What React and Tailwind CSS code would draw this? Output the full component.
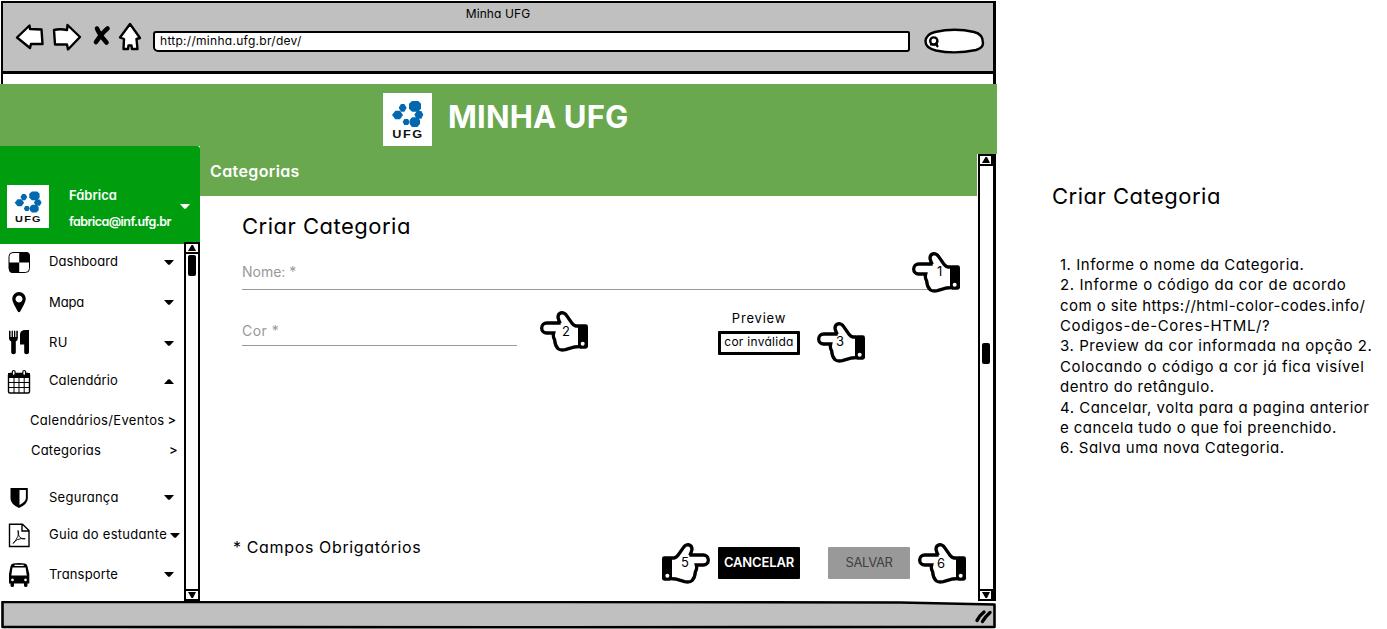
import React from "react";

const outline = { fill: "#fff", stroke: "#000", strokeWidth: 2.4, strokeLinejoin: "round", strokeLinecap: "round" };

function NavIcons() {
  return (
    <svg className="mt-[19px] h-[32px] w-[130px] shrink-0" viewBox="14 22 130 32">
      <path {...outline} d="M17 37.500 L29.500 25.500 L30 29 L41.500 29.500 L42.500 44 L31 44 L30 48 Z" />
      <path {...outline} d="M54 30 Q60 28.500 67 30 L67.500 25 L80 37 L68 49.500 L67 44.500 L55 44.500 Z" />
      <path d="M97 28.500 Q99 34 106.500 42.500 M107.500 28.500 Q102 33 96 42" fill="none" stroke="#000" strokeWidth="4.600" strokeLinecap="round" />
      <path {...outline} d="M130 24 L140 38 L136.500 39 L137.500 49 L132 49 L131.500 45.500 L128.500 45.500 L128 49 L123.500 49 L124 39 L120 37.500 Z" />
    </svg>
  );
}

function SearchPill() {
  return (
    <svg className="mt-[23px] ml-[13px] h-[30px] w-[62px] shrink-0" viewBox="923 26 62 30">
      <path {...outline} d="M935 32 Q955 27.500 974 32 Q983 34 983 43 Q983 48 976 50 Q955 54.500 936 50.500 Q925.500 48 925.500 41.500 Q926 34 935 32 Z" />
      <circle cx="933.800" cy="41" r="3.600" fill="none" stroke="#000" strokeWidth="2.400" />
      <path d="M935 43 L938 47 M930 44.500 H938" fill="none" stroke="#000" strokeWidth="2.200" />
    </svg>
  );
}

function UfgLogo({ className }) {
  return (
    <svg className={className} viewBox="0 0 147 159" preserveAspectRatio="none">
      <rect width="147" height="159" fill="#fff" />
      <g fill="#0368ad">
        <path d="M54 33h10l7 11-7 12H54l-7-12z" />
        <path d="M87 24h19l8 8v15l-8 9H87l-9-9V32z" />
        <path d="M37 53h14l9 13-9 13H37L27 66z" />
        <path d="M101 54h14l6 11-6 12h-14l-7-12z" />
        <path d="M64 78h11l5 9-5 9H64l-5-9z" />
        <path d="M87 73h16l8 8v12l-8 9H87l-7-9V81z" />
      </g>
      <text x="28" y="135" textLength="94" lengthAdjust="spacingAndGlyphs" fontFamily="Liberation Sans, sans-serif" fontWeight="bold" fontSize="34" letterSpacing="4" fill="#111">UFG</text>
    </svg>
  );
}

function Caret({ up, color = "fill-black" }) {
  return (
    <svg className={`h-[5px] w-[10px] shrink-0 ${color}`} viewBox="0 0 10 5">
      <path d={up ? "M0 5 L4 .4 Q5 0 6 .4 L10 5Z" : "M0 0 H10 L6 4.600 Q5 5 4 4.600Z"} />
    </svg>
  );
}

function Hand({ n, flip, digit = "left-[19px]", className = "" }) {
  return (
    <div className={`relative h-[41px] w-[48px] shrink-0 ${className}`}>
      <svg className={flip ? "h-full w-full -scale-x-100" : "h-full w-full"} viewBox="0 0 144 123">
        <path
          d="M60 36 H20 A15 15 0 0 0 20 66 H41 Q38 78 44 87 Q45 104 54 113 Q60 119 76 116 L104 108 Q112 107 118 107 V45 H108 Q102 44 97 38 L80 14 Q74 5 65 5 Q54 7 54 19 Q56 29 61 37 Z"
          fill="#fff"
        />
        <path
          d="M62 36 H20 A15 15 0 0 0 20 66 H41 Q38 78 44 87 Q45 104 54 113 Q60 119 76 116 L104 108 Q112 107 118 107 M118 45 H108 Q102 44 97 38 L80 14 Q74 5 65 5 Q54 7 54 19 Q56 29 61 37"
          fill="none"
          stroke="#000"
          strokeWidth="10"
        />
        <rect x="114" y="40" width="30" height="73" rx="7" />
        <circle cx="128" cy="98" r="6" fill="#fff" />
      </svg>
      <span className={`absolute top-[11px] text-[13px] leading-[16px] ${digit}`}>{n}</span>
    </div>
  );
}

function ScrollButton({ up, className = "" }) {
  return (
    <div className={`flex h-[12px] shrink-0 items-center justify-center border-2 border-black bg-white ${className}`}>
      <svg className="h-[6px] w-[8px]" viewBox="0 0 8 6">
        <path d={up ? "M0 6 L3.500 0 H5 L8 6Z" : "M0 0 H8 L5 6 H3.500Z"} />
      </svg>
    </div>
  );
}

const iconClass = "h-[26px] w-[24px] shrink-0";

function DashboardIcon() {
  return (
    <svg className={iconClass} viewBox="7 250 24 26">
      <rect x="9" y="252.500" width="20.500" height="20" rx="4" fill="#fff" stroke="#000" />
      <path d="M19.200 252 H26 Q30 252 30 256 V262.500 H19.200Z M9 262.500 H19.200 V273 H13 Q9 273 9 269Z" />
    </svg>
  );
}
function PinIcon() {
  return (
    <svg className={iconClass} viewBox="7 290 24 26">
      <path fillRule="evenodd" d="M19 292 a6.800 6.800 0 0 1 6.800 6.800 Q25.800 301 24 304.500 L20.200 311.500 Q19 313 17.800 311.500 L14 304.500 Q12.200 301 12.200 298.800 A6.800 6.800 0 0 1 19 292Z M19 295.400 a3.500 3.500 0 1 0 .01 0Z" />
    </svg>
  );
}
function CutleryIcon() {
  return (
    <svg className={iconClass} viewBox="7 330 24 26">
      <path d="M9 331 q.8-1 1.500 0 v6 h1.100 v-6 q.6-1 1.300 0 v6 h1.100 v-6 q.6-1 1.300 0 v6 h1 v-6 q.8-1 1.500 0 v7.500 q0 2-2 3 v11 q0 1.700-2.300 1.700 t-2.300-1.700 v-11 q-2.200-1-2.200-3Z" />
      <path d="M29 330 V352.500 q0 1.700-2.400 1.700 t-2.400-1.700 V344.500 H20 V334.500 Q20 330 25.500 330Z" />
    </svg>
  );
}
function CalendarIcon() {
  return (
    <svg className={iconClass} viewBox="7 370 24 26">
      <rect x="8.500" y="374.500" width="21" height="19.500" rx="1.500" fill="#fff" stroke="#000" strokeWidth="1.400" />
      <path d="M8 374 h22 v5 h-22Z" />
      <path d="M14 379 V394 M19 379 V394 M24.200 379 V394 M8 383.500 H30 M8 388.500 H30" stroke="#000" strokeWidth="1" />
      <rect x="12.300" y="371.500" width="2.800" height="5" rx="1.400" fill="#fff" stroke="#000" strokeWidth="1.200" />
      <rect x="22.800" y="371.500" width="2.800" height="5" rx="1.400" fill="#fff" stroke="#000" strokeWidth="1.200" />
    </svg>
  );
}
function ShieldIcon() {
  return (
    <svg className={iconClass} viewBox="7 485 24 26">
      <path fillRule="evenodd" d="M10.500 488 H27.800 V498.500 Q27.800 504 19 508 Q10.500 504 10.500 498.500Z M19.500 490 V505 Q25.900 501.500 25.900 498 V490Z" />
    </svg>
  );
}
function PdfIcon() {
  return (
    <svg className={iconClass} viewBox="7 522 24 26">
      <path d="M9.500 524.200 H22.500 L29 530.500 V546.500 H9.500Z M22 524.500 V531 H29" fill="none" stroke="#000" strokeWidth="1.400" />
      <path d="M18 530.500 q1.500 2-.2 6 q-1.800 4-4.600 7 q.7-2.200 4-3.800 q4-1.700 8-.9 q-3.500 .5-5.800-2 q-1.600-2-1.400-6.300Z" fill="none" stroke="#000" strokeWidth="0.900" />
    </svg>
  );
}
function BusIcon() {
  return (
    <svg className={iconClass} viewBox="7 562 24 26">
      <path fillRule="evenodd" d="M13 563.500 Q19 562.300 25 563.500 Q27 564 27.400 566 L29.300 574 V583.500 H27.500 V585.500 Q27.500 587 25.800 587 T24 585.500 V583.500 H14 V585.500 Q14 587 12.300 587 T10.500 585.500 V583.500 H9 V574 L10.600 566 Q11 564 13 563.500Z M14.500 564.800 V566 H23.700 V564.800Z M12.500 567.500 L11.300 575.500 H26.800 L25.600 567.500Z M12.500 578.500 a1.400 1.400 0 1 0 .01 0Z M25.500 578.500 a1.400 1.400 0 1 0 .01 0Z" />
    </svg>
  );
}

function MenuRow({ icon, label, up, className, shift = "mt-0", caret = "pr-[10px]" }) {
  return (
    <div className={`flex items-center pl-[7px] whitespace-nowrap ${className}`}>
      {icon}
      <span className={`ml-[18px] flex-1 ${shift}`}>{label}</span>
      <div className={caret}><Caret up={up} /></div>
    </div>
  );
}

function Sidebar() {
  return (
    <aside className="flex w-[200px] shrink-0 flex-col">
      <div className="flex h-[98px] shrink-0 items-end rounded-tr-[3px] bg-[#009e0f] pb-[16px] pl-[7px] text-white">
        <UfgLogo className="h-[43px] w-[42px] shrink-0" />
        <div className="-mb-[4px] ml-[20px] flex w-[107px] flex-col gap-[7px] font-semibold whitespace-nowrap">
          <span className="text-[13px] leading-[20px]">Fábrica</span>
          <span className="text-[12.5px] leading-[20px] tracking-[-0.56px]">fabrica@inf.ufg.br</span>
        </div>
        <div className="mb-[19px] ml-[4px]"><Caret color="fill-white" /></div>
      </div>
      <div className="flex min-h-0 flex-1">
        <nav className="-ml-px w-[185px] shrink-0 border-l border-[#c4c4c4] text-[13px] tracking-[0.2px]">
          <MenuRow icon={<DashboardIcon />} label={<span className="tracking-[0.1px]">Dashboard</span>} shift="-mt-[2px]" className="h-[37px]" />
          <MenuRow icon={<PinIcon />} label={<span className="tracking-[-0.1px]">Mapa</span>} className="h-[43px]" />
          <MenuRow icon={<CutleryIcon />} label={<span className="tracking-[0.5px]">RU</span>} className="h-[38px]" />
          <MenuRow icon={<CalendarIcon />} label={<span className="tracking-[0.12px]">Calendário</span>} shift="-mt-[2px]" up className="h-[39px]" />
          <div className="flex h-[38px] items-center gap-[3px] pt-[2px] pl-[30px] tracking-[0.33px] whitespace-nowrap">
            Calendários/Eventos <span className="font-medium">&gt;</span>
          </div>
          <div className="flex h-[22px] items-center justify-between pt-[2px] pr-[6px] pl-[31px] tracking-[0.2px]">
            Categorias <span className="font-medium">&gt;</span>
          </div>
          <MenuRow icon={<ShieldIcon />} label={<span className="tracking-[0.28px]">Segurança</span>} className="mt-[18px] h-[37px]" />
          <MenuRow icon={<PdfIcon />} label={<span className="tracking-[0.28px]">Guia do estudante</span>} className="h-[38px]" caret="pr-[4px]" />
          <MenuRow icon={<BusIcon />} label={<span className="tracking-[0.16px]">Transporte</span>} className="h-[41px]" />
        </nav>
        <div className="-mt-[2px] flex w-[16px] shrink-0 flex-col border-x-2 border-black bg-white">
          <ScrollButton up className="-mx-[2px]" />
          <div className="mx-[2px] mt-px h-[21px] rounded-[2px] bg-black" />
          <div className="flex-1" />
          <ScrollButton className="-mx-[2px]" />
        </div>
      </div>
    </aside>
  );
}

function CategoryForm() {
  return (
    <main className="flex w-[777px] shrink-0 flex-col">
      <div className="h-[50px] shrink-0 bg-[#6aa84f] pt-[13px] pl-[10px] text-[16px] leading-[24px] font-semibold tracking-[0.38px] text-white">Categorias</div>
      <h2 className="mt-[15px] pl-[42px] text-[22px] leading-[30px] tracking-[0.5px]">Criar Categoria</h2>
      <div className="mt-[10px] flex h-[43px] pl-[42px] text-[14px] text-[#999]">
        <div className="h-[39px] w-[682px] border-b-[1.500px] border-[#999] pt-[11px] leading-[20px]">Nome: *</div>
        <div className="-mr-[8px] h-[39px] w-[8px] border-b-[1.500px] border-[#999]" />
        <Hand n="1" digit="left-[25px]" className="-ml-[12px] mt-px text-black" />
      </div>
      <div className="mt-[12px] flex h-[54px] pl-[42px]">
        <div className="mt-[4px] h-[36px] w-[275px] border-b-[1.500px] border-[#999] pt-[11px] text-[14px] leading-[20px] tracking-[0.5px] text-[#999]">Cor *</div>
        <Hand n="2" digit="left-[22px] mt-px" className="mt-[5px] ml-[23px]" />
        <div className="ml-[130px] flex w-[82px] flex-col items-center">
          <span className="mt-[2px] text-[13px] leading-[20px] tracking-[0.8px]">Preview</span>
          <div className="mt-[3px] flex h-[24px] w-[82px] shrink-0 items-center justify-center rounded-[1px] border-[3px] border-black pb-[2px] text-[12px] tracking-[0.28px]">cor inválida</div>
        </div>
        <Hand n="3" className="mt-[16px] ml-[17px]" />
      </div>
      <div className="flex flex-1 items-end pb-[17px] pl-[33px]">
        <span className="mb-[25px] w-[429px] text-[16px] leading-[24px] tracking-[0.64px]">* Campos Obrigatórios</span>
        <Hand n="5" flip />
        <button className="mb-[5px] ml-[8px] h-[32px] w-[82px] rounded-[1px] bg-black pb-px text-[13px] font-semibold tracking-[-0.15px] text-white">CANCELAR</button>
        <button className="mb-[5px] ml-[28px] h-[32px] w-[82px] rounded-[1px] bg-[#999] pb-px text-[13px] tracking-[-0.35px] text-[#404040]">SALVAR</button>
        <Hand n="6" digit="left-[19px] mt-px" className="ml-[8px]" />
      </div>
    </main>
  );
}

function BrowserWindow() {
  return (
    <div className="flex h-[629px] w-[997px] shrink-0 flex-col">
      <header className="mt-px mr-px ml-px flex h-[83px] shrink-0 flex-col border-t-[2.500px] border-r-[3px] border-l-2 border-black">
        <div className="flex h-[71px] shrink-0 flex-col border-b-[3px] border-black bg-[#c0c0c0]">
          <div className="-mb-[17px] h-[17px] pt-px text-center text-[12px] leading-[19px] tracking-[0.1px]">Minha UFG</div>
          <div className="flex pl-[11px]">
            <NavIcons />
            <div className="mt-[28px] ml-[9px] flex h-[21px] w-[757px] shrink-0 items-center rounded-[3px_2px_3px_5px] border-[2.500px] border-black bg-white pb-px pl-[5px] text-[12px] tracking-[0.28px]">
              http://minha.ufg.br/dev/
            </div>
            <SearchPill />
          </div>
        </div>
      </header>
      <div className="flex h-[62px] shrink-0 items-end bg-[#6aa84f] pl-[383px]">
        <UfgLogo className="h-[53px] w-[49px]" />
        <h1 className="mb-[8px] ml-[16px] text-[31px] leading-[42px] font-bold tracking-[0.16px] text-white">MINHA UFG</h1>
      </div>
      <div className="flex h-[455px] shrink-0">
        <Sidebar />
        <CategoryForm />
        <div className="flex w-[20px] shrink-0 flex-col">
          <div className="h-[8px] shrink-0 bg-[#6aa84f]" />
          <div className="mr-px ml-px flex min-h-0 flex-1 flex-col border-r-[3px] border-l-2 border-black">
            <ScrollButton up className="-ml-[2px]" />
            <div className="mt-[177px] mr-[3px] ml-[2px] h-[21px] rounded-[2px] bg-black" />
            <div className="flex-1" />
            <ScrollButton className="-ml-[2px]" />
          </div>
        </div>
      </div>
      <svg className="h-[28px] w-[997px] shrink-0" viewBox="0 601 997 28">
        <path d="M2.500 602 L560 602 L900 602.500 L994.500 604.500 V627 L560 627.300 L2.500 627Z" fill="#c0c0c0" stroke="#000" strokeWidth="2.600" strokeLinejoin="round" />
        <path d="M977 620.500 Q979 616 984 612 M982.500 621.500 Q985 617 990 612.500" fill="none" stroke="#000" strokeWidth="3.400" strokeLinecap="round" />
      </svg>
    </div>
  );
}

function Notes() {
  return (
    <section className="pt-[181px] pl-[55px] whitespace-nowrap">
      <h2 className="text-[22px] leading-[30px] tracking-[0.5px]">Criar Categoria</h2>
      <div className="mt-[44px] ml-[8px] text-[15px] leading-[20.360px]">
        <p className="tracking-[0.52px]">1. Informe o nome da Categoria.</p>
        <p className="tracking-[0.59px]">2. Informe o código da cor de acordo</p>
        <p className="tracking-[0.44px]">com o site https://html-color-codes.info/</p>
        <p className="tracking-[0.65px]">Codigos-de-Cores-HTML/?</p>
        <p className="tracking-[0.57px]">3. Preview da cor informada na opção 2.</p>
        <p className="tracking-[0.59px]">Colocando o código a cor já fica visível</p>
        <p className="tracking-[0.49px]">dentro do retângulo.</p>
        <p className="tracking-[0.50px]">4. Cancelar, volta para a pagina anterior</p>
        <p className="tracking-[0.44px]">e cancela tudo o que foi preenchido.</p>
        <p className="tracking-[0.49px]">6. Salva uma nova Categoria.</p>
      </div>
    </section>
  );
}

export default function App() {
  return (
    <div className="flex h-[629px] w-[1387px] overflow-hidden bg-white font-['Inter',sans-serif] text-black [font-feature-settings:'cv11']">
      <BrowserWindow />
      <Notes />
    </div>
  );
}
